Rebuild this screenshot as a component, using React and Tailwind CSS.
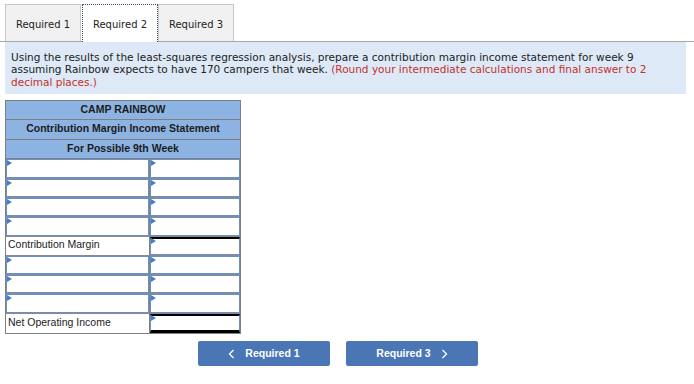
import React from "react";

const verdana = { fontFamily: '"DejaVu Sans", Verdana, sans-serif' };
const arial = { fontFamily: '"Liberation Sans", Arial, sans-serif' };

function Flag() {
  return (
    <span className="absolute left-[1px] top-[1px] w-0 h-0 border-y-[3px] border-y-transparent border-l-[5px] border-l-[#4a7ebb]" />
  );
}

function InputCell({ topRule, bottomRule }) {
  return (
    <div className="relative w-full h-full">
      <div
        className={`absolute inset-0 bg-white border border-[#6a90cc] ${topRule ? "border-t-2 border-t-black" : ""} ${bottomRule ? "border-b-[3px] border-b-black" : ""}`}
      />
      <Flag />
    </div>
  );
}

function HeaderRow({ children }) {
  return (
    <div className="h-[19.5px] flex items-center justify-center pb-[1px] bg-[#8db3e2] border-b border-[#7f7f7f] text-[10.5px] font-bold text-[#1c1c1c]">
      {children}
    </div>
  );
}

function DataRow({ label, total, last }) {
  return (
    <div className={`h-[19.3px] flex ${last ? "" : "border-b border-[#8a8a8a]"}`}>
      {label ? (
        <div className="w-[144px] h-full flex items-center pl-[2px] pb-[2px] text-[10.5px] text-[#1c1c1c] bg-white border-r border-[#7f7f7f]">
          {label}
        </div>
      ) : (
        <div className="w-[144px] h-full border-r border-[#7f7f7f]">
          <InputCell />
        </div>
      )}
      <div className="flex-1 h-full">
        <InputCell topRule={total} bottomRule={last} />
      </div>
    </div>
  );
}

export default function App() {
  const rows = [
    {}, {}, {}, {},
    { label: "Contribution Margin", total: true },
    {}, {}, {},
    { label: "Net Operating Income", total: true, last: true },
  ];

  return (
    <div className="w-[694px] h-[384px] bg-white relative overflow-hidden">
      {/* Tabs */}
      <div className="flex items-end pl-[5px] border-b border-[#a8a8a8] h-[42px]" style={verdana}>
        <div className="w-[76px] h-[37px] flex items-center justify-center pt-[2px] bg-[#f1f1f1] border border-[#c8c8c8] border-b-0 text-[10px] text-[#222]">
          Required 1
        </div>
        <div className="ml-[1px] w-[76px] h-[38px] flex items-center justify-center pt-[1px] bg-white border border-dotted border-[#3a4a6a] border-b-0 text-[10px] text-[#222] -mb-[1px] relative z-10">
          Required 2
        </div>
        <div className="w-[76px] h-[37px] flex items-center justify-center pt-[2px] bg-[#f1f1f1] border border-[#c8c8c8] border-b-0 text-[10px] text-[#222]">
          Required 3
        </div>
      </div>

      {/* Instructions */}
      <div className="ml-[5px] mr-[8px] bg-[#dde9f7] pl-[6px] pr-[6px] pt-[9px] pb-[6px] text-[10.5px] leading-[12.3px] text-[#222]" style={verdana}>
        Using the results of the least-squares regression analysis, prepare a contribution margin income statement for week 9
        assuming Rainbow expects to have 170 campers that week.{" "}
        <span className="text-[#c4312b]">(Round your intermediate calculations and final answer to 2 decimal places.)</span>
      </div>

      {/* Statement */}
      <div className="ml-[5px] mt-[6px] w-[236px] border border-[#7f7f7f]" style={arial}>
        <HeaderRow>CAMP RAINBOW</HeaderRow>
        <HeaderRow>Contribution Margin Income Statement</HeaderRow>
        <HeaderRow>For Possible 9th Week</HeaderRow>
        {rows.map((r, i) => (
          <DataRow key={i} label={r.label} total={r.total} last={r.last} />
        ))}
      </div>

      {/* Navigation */}
      <div className="flex gap-[16px] ml-[198px] mt-[7px]" style={arial}>
        <button className="w-[132px] h-[25px] rounded-[2px] bg-[#4a76b5] text-white text-[10.5px] font-bold flex items-center justify-center gap-[10px]">
          <svg width="7" height="10" viewBox="0 0 7 10"><path d="M5.5 1 L1.5 5 L5.5 9" stroke="white" strokeWidth="1.3" fill="none" /></svg>
          Required 1
        </button>
        <button className="w-[132px] h-[25px] rounded-[2px] bg-[#4a76b5] text-white text-[10.5px] font-bold flex items-center justify-center gap-[10px]">
          Required 3
          <svg width="7" height="10" viewBox="0 0 7 10"><path d="M1.5 1 L5.5 5 L1.5 9" stroke="white" strokeWidth="1.3" fill="none" /></svg>
        </button>
      </div>
    </div>
  );
}
